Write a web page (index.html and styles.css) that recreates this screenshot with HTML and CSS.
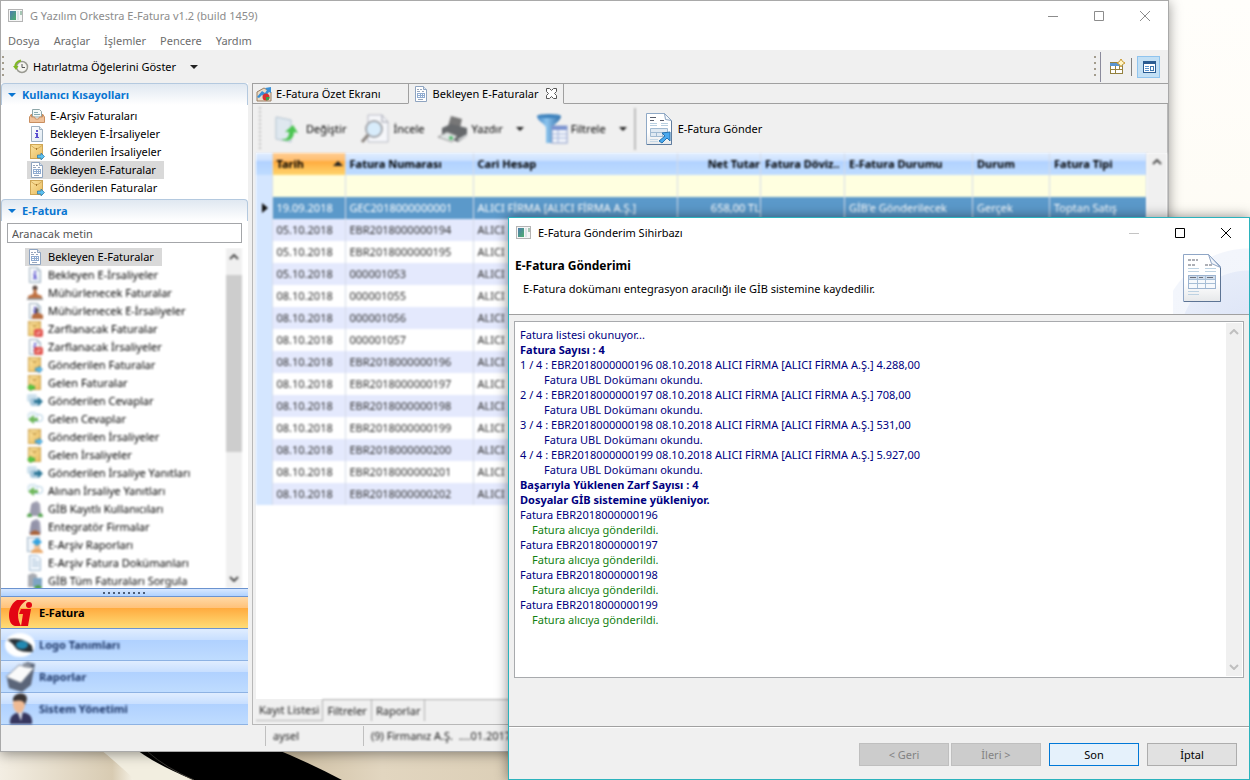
FILE: index.html
```html
<!DOCTYPE html>
<html lang="tr">

<head>
	<meta charset="utf-8">
	<title>G Yazılım Orkestra E-Fatura</title>
	<link rel="stylesheet" href="styles.css">
</head>

<body>

	<!-- Icon definitions, used below with <use> -->
	<svg class="icon-defs" aria-hidden="true">
		<defs>
			<linearGradient id="teal" x1="0" y1="0" x2="1" y2="1">
				<stop offset="0" stop-color="#4d7cae"/><stop offset="1" stop-color="#4fae6e"/>
			</linearGradient>
			<linearGradient id="gold" x1="0" y1="0" x2="1" y2="1">
				<stop offset="0" stop-color="#fbe3a0"/><stop offset="1" stop-color="#e8bb5e"/>
			</linearGradient>
			<linearGradient id="paper" x1="0" y1="0" x2="1" y2="1">
				<stop offset="0" stop-color="#ffffff"/><stop offset="1" stop-color="#dfe9f2"/>
			</linearGradient>
			<linearGradient id="page" x1="0" y1="0" x2="0" y2="1">
				<stop offset=".6" stop-color="#ffffff"/><stop offset="1" stop-color="#e6e8ea"/>
			</linearGradient>
			<linearGradient id="funnel" x1="0" y1="0" x2="1" y2="0">
				<stop offset="0" stop-color="#3f84c4"/><stop offset=".4" stop-color="#8cc4ee"/><stop offset="1" stop-color="#2f6da8"/>
			</linearGradient>
		</defs>
		<symbol id="app" viewBox="0 0 16 16">
			<rect x=".5" y="1.500" width="14" height="12" fill="#f6f6f6" stroke="#b4b4b4"/>
			<rect x="2" y="3" width="6" height="9" fill="url(#teal)"/>
			<rect x="9" y="3" width="2" height="9" fill="#dde3e6"/>
			<rect x="12" y="3" width="2" height="4" fill="#a6c6b4"/>
		</symbol>
		<symbol id="tray" viewBox="0 0 16 16">
			<path d="M3.500 1.500h7l2 2V9h-9z" fill="#f5faf8" stroke="#8fa7a9"/>
			<path d="M5 4.500h4M5 6.500h6" stroke="#86aab0"/>
			<path d="M2.500 6L.5 9v5.500h15V9l-2-3v3h-3l-1 2h-3l-1-2h-3z" fill="#f0c29a" stroke="#c98f60"/>
		</symbol>
		<symbol id="info" viewBox="0 0 16 16">
			<path d="M2.500.5h8l3 3v12h-11z" fill="url(#paper)" stroke="#9fb0bf"/>
			<path d="M10.500.5v3h3" fill="#dce8f0" stroke="#9fb0bf"/>
			<path d="M7 4h2v2H7zM6 7h3v4h1v1H6v-1h1V8H6z" fill="#5a4fd0"/>
		</symbol>
		<symbol id="envelope" viewBox="0 0 16 16">
			<rect x="1.500" y=".5" width="12" height="14" fill="url(#gold)" stroke="#cfa654"/>
			<path d="M2 1.500l4 3h3l4-3" fill="none" stroke="#d3ab5c"/>
			<rect x="7" y="4" width="1" height="2" fill="#a5782c"/>
		</symbol>
		<symbol id="env-out" viewBox="0 0 16 16">
			<use href="#envelope"/>
			<path d="M8.500 11H12V9l3.500 3.500L12 16v-2H8.500z" fill="#5cc0f0" stroke="#2a76a6" stroke-width=".7"/>
		</symbol>
		<symbol id="env-in" viewBox="0 0 16 16">
			<use href="#envelope"/>
			<path d="M7.500 11H4V9L.5 12.500 4 16v-2h3.500z" fill="#55d045" stroke="#34a12c" stroke-width=".7"/>
		</symbol>
		<symbol id="env-seal" viewBox="0 0 16 16">
			<use href="#envelope"/>
			<rect x="7" y="8" width="9" height="8" rx="2" fill="#e2554f"/>
			<path d="M9 13l4-3M10 14l4-3" stroke="#f8bcb8"/>
		</symbol>
		<symbol id="doc-seal" viewBox="0 0 16 16">
			<use href="#info"/>
			<rect x="7" y="8" width="9" height="8" rx="2" fill="#e2554f"/>
			<path d="M9 13l4-3M10 14l4-3" stroke="#f8bcb8"/>
		</symbol>
		<symbol id="invoice" viewBox="0 0 16 16">
			<path d="M2.500.5h8l3 3v12h-11z" fill="#fff" stroke="#8fa4c0"/>
			<path d="M10.500.5v3h3" fill="#dbe5f0" stroke="#8fa4c0"/>
			<path d="M4 3.500h2M7 3.500h2M4 5.500h3M9 5.500h2M5 13.500h5" stroke="#98a6bc"/>
			<rect x="4" y="7" width="8" height="5" fill="#8fabd0"/>
			<path d="M5 8h2v1H5zM8 8h1v1H8zM10 8h1v1h-1zM5 10h2v1H5zM8 10h1v1H8zM10 10h1v1h-1z" fill="#fff"/>
		</symbol>
		<symbol id="stamp" viewBox="0 0 16 16">
			<circle cx="8" cy="3" r="2.500" fill="#5b4a44"/>
			<path d="M7 4h2l1 5 5 2v2H1v-2l5-2z" fill="#bf7040"/>
			<rect x="0" y="13" width="16" height="2" fill="#9a9a9a"/>
		</symbol>
		<symbol id="doc-stamp" viewBox="0 0 16 16">
			<use href="#info"/>
			<path d="M10 5c2 0 2 2 1 5h-2c-1-3-1-5 1-5z" fill="#5b5450"/>
			<path d="M5 12l4-2h3l4 2v4H5z" fill="#b86d40"/>
		</symbol>
		<symbol id="reply-out" viewBox="0 0 16 16">
			<rect x="0" y="1" width="10" height="8" rx="2" fill="#cfe2ee"/>
			<rect x="3" y="5" width="11" height="8" rx="3" fill="#a7c8dc"/>
			<path d="M7 7h4V4l5 4.500-5 4.500v-3H7z" fill="#2c7696"/>
		</symbol>
		<symbol id="reply-in" viewBox="0 0 16 16">
			<rect x="5" y="3.500" width="10.500" height="7" rx="3" fill="#fff" stroke="#a4c6dc"/>
			<rect x="1" y="1.500" width="9" height="7" rx="3" fill="#eef6fa" stroke="#c3dae8"/>
			<path d="M11 7H7V4L1 8.500 7 13v-3h4z" fill="#6fb85a"/>
		</symbol>
		<symbol id="users" viewBox="0 0 16 16">
			<path d="M5 2l5-2 3 3 1 12H2L4 4z" fill="#a3a3b4"/>
			<path d="M6 3v11M9 3v11" stroke="#8c8ca2"/>
			<path d="M0 16c0-5 5-5 5 0zM11 16c0-5 5-5 5 0z" fill="#56a550"/>
		</symbol>
		<symbol id="firm" viewBox="0 0 16 16">
			<path d="M5 2l5-2 3 3 1 12H2L4 4z" fill="#9b9bb0"/>
			<path d="M6 3v8M9 3v8" stroke="#83839b"/>
			<path d="M3 16c0-6 10-6 10 0z" fill="#a9623a"/>
		</symbol>
		<symbol id="report" viewBox="0 0 16 16">
			<rect x=".5" y=".5" width="12" height="14" fill="#eef3f8" stroke="#9fb3c6"/>
			<path d="M4 16c0-6 12-6 12 0z" fill="#eaa96a"/>
			<circle cx="10" cy="9" r="3" fill="#f3c296"/>
			<path d="M10 1l5 4-5 4-5-4z" fill="#35a3df"/>
		</symbol>
		<symbol id="docs" viewBox="0 0 16 16">
			<path d="M2.500.5h8l3 3v12h-11z" fill="#eef5fb" stroke="#a6bdd3"/>
			<path d="M5 4.500h4M5 7.500h7M5 10.500h7" stroke="#9bb6d0"/>
		</symbol>
		<symbol id="query" viewBox="0 0 16 16">
			<path d="M1 2l5-2 4 2v12H1z" fill="#a8abb2"/>
			<rect x="6" y="5" width="9" height="9" fill="#7fa5c4"/>
			<path d="M7 16c0-5 8-5 8 0z" fill="#4c9e48"/>
		</symbol>
		<symbol id="big-invoice" viewBox="0 0 38 48">
			<path d="M.5.5h25l12 12v35H.5z" fill="url(#page)" stroke="#8fa6c6"/>
			<path d="M37.500 13v34.500H1" fill="none" stroke="#5d7494"/>
			<path d="M25.500.5l3 9 9 4z" fill="#f3f6fb" stroke="#8ea4c4"/>
			<path d="M5 6h10M5 11h7M22 11h8" stroke="#5d606c" stroke-dasharray="3 1"/>
			<path d="M5 14.500h11M5 17.500h11M22 14.500h11M22 17.500h11M5 37.500h11M5 40.500h11" stroke="#bdd2e2"/>
			<rect x="5.500" y="21.500" width="27" height="13" fill="#f6f9fc" stroke="#9db4d0"/>
			<path d="M6 22h26v3H6z" fill="#cfdceb"/>
			<path d="M6 25.500h26M6 29.500h26M14.500 22v12M22.500 22v12" stroke="#a8bfd6"/>
			<path d="M7 23.500h6M16 23.500h4M24 23.500h6" stroke="#6b6f7a"/>
		</symbol>
	</svg>

	<!-- Wallpaper -->
	<svg class="wallpaper-curve" viewBox="0 0 510 40" aria-hidden="true">
		<defs>
			<linearGradient id="sand" x1="0" y1="0" x2="1" y2="0">
				<stop offset="0" stop-color="#f3eee3"/><stop offset=".22" stop-color="#d8cbb2"/>
				<stop offset=".26" stop-color="#f3efe2"/><stop offset=".5" stop-color="#c9b99b"/>
				<stop offset=".75" stop-color="#e2d6c0"/><stop offset="1" stop-color="#dccfb7"/>
			</linearGradient>
		</defs>
		<rect width="510" height="40" fill="url(#sand)"/>
		<path d="M96 6q18 14 39 34h56Q152 20 132 6z" fill="#f2eee0"/>
		<path d="M132 6q20 17 62 34h148Q304 20 268 6z" fill="#000"/>
		<path d="M148 12q18 16 46 28" fill="none" stroke="#3a3834"/>
	</svg>

	<div class="window main-window">
		<div class="title-bar">
			<svg class="icon"><use href="#app"/></svg>
			<span class="title-text">G Yazılım Orkestra E-Fatura v1.2 (build 1459)</span>
			<button class="caption-button" aria-label="Simge durumuna küçült"><svg viewBox="0 0 10 10"><path d="M0 5.500h10"/></svg></button>
			<button class="caption-button" aria-label="Ekranı kapla"><svg viewBox="0 0 10 10"><path d="M.5.5h9v9h-9z"/></svg></button>
			<button class="caption-button" aria-label="Kapat"><svg viewBox="0 0 10 10"><path d="M0 0l10 10M10 0L0 10"/></svg></button>
		</div>

		<div class="menu-bar">
			<button>Dosya</button>
			<button>Araçlar</button>
			<button>İşlemler</button>
			<button>Pencere</button>
			<button>Yardım</button>
		</div>

		<div class="tool-bar">
			<span class="grip"></span>
			<button class="reminder">
				<svg class="icon" viewBox="0 0 16 16">
					<circle cx="9" cy="8" r="5.500" fill="#f4f4f0" stroke="#9a9a92" stroke-width="1.500"/>
					<path d="M9 5v3.500h3" fill="none" stroke="#555"/>
					<path d="M8 1.500C4 2 2 5 2.500 8" fill="none" stroke="#7fb822" stroke-width="2"/>
					<path d="M0 7h5.500L3 11z" fill="#7fb822"/>
				</svg>
				Hatırlatma Öğelerini Göster
				<span class="caret"></span>
			</button>
			<div class="perspectives">
				<span class="grip"></span>
				<span class="curve"></span>
				<button aria-label="Perspektif aç">
					<svg class="icon" viewBox="0 0 16 16">
						<rect x="1.500" y="3.500" width="12" height="11" fill="#fff" stroke="#94813f"/>
						<path d="M1 4h13v3H1z" fill="#5a94cf"/>
						<path d="M6.500 7v8M1 10.500h13M10.500 7v4" stroke="#94813f"/>
						<path d="M12 0l1.500 2.500L16 4l-2.500 1.500L12 8l-1.500-2.500L8 4l2.500-1.500z" fill="#fff6c8" stroke="#c9962c"/>
					</svg>
				</button>
				<span class="divider"></span>
				<button class="pressed" aria-label="E-Fatura perspektifi">
					<svg class="icon" viewBox="0 0 16 16">
						<rect x="2.500" y="2.500" width="12" height="11" fill="#fff" stroke="#2a5c92"/>
						<path d="M2 3h13v2H2z" fill="#2a5c92"/>
						<path d="M4 7.500h4M4 9.500h4M4 11.500h4" stroke="#5a94cf"/>
						<rect x="9.500" y="7.500" width="3" height="4" fill="none" stroke="#3f78b0"/>
					</svg>
				</button>
			</div>
		</div>

		<div class="workbench">
			<div class="side">
				<div class="section">
					<h2 class="section-title">Kullanıcı Kısayolları</h2>
					<ul class="tree shortcuts">
						<li><a href="#"><svg class="icon"><use href="#tray"/></svg>E-Arşiv Faturaları</a></li>
						<li><a href="#"><svg class="icon"><use href="#info"/></svg>Bekleyen E-İrsaliyeler</a></li>
						<li><a href="#"><svg class="icon"><use href="#env-out"/></svg>Gönderilen İrsaliyeler</a></li>
						<li><a href="#" class="selected"><svg class="icon"><use href="#invoice"/></svg>Bekleyen E-Faturalar</a></li>
						<li><a href="#"><svg class="icon"><use href="#env-out"/></svg>Gönderilen Faturalar</a></li>
					</ul>
				</div>

				<div class="section section-grow">
					<h2 class="section-title">E-Fatura</h2>
					<input class="search" type="text" placeholder="Aranacak metin" aria-label="Aranacak metin">
					<div class="tree-scroll">
						<ul class="tree">
							<li><a href="#" class="selected"><svg class="icon"><use href="#invoice"/></svg>Bekleyen E-Faturalar</a></li>
							<li class="soft"><a href="#"><svg class="icon"><use href="#info"/></svg>Bekleyen E-İrsaliyeler</a></li>
							<li class="soft"><a href="#"><svg class="icon"><use href="#stamp"/></svg>Mühürlenecek Faturalar</a></li>
							<li class="soft"><a href="#"><svg class="icon"><use href="#doc-stamp"/></svg>Mühürlenecek E-İrsaliyeler</a></li>
							<li class="soft"><a href="#"><svg class="icon"><use href="#env-seal"/></svg>Zarflanacak Faturalar</a></li>
							<li class="soft"><a href="#"><svg class="icon"><use href="#doc-seal"/></svg>Zarflanacak İrsaliyeler</a></li>
							<li class="soft"><a href="#"><svg class="icon"><use href="#env-out"/></svg>Gönderilen Faturalar</a></li>
							<li class="soft"><a href="#"><svg class="icon"><use href="#env-in"/></svg>Gelen Faturalar</a></li>
							<li class="soft"><a href="#"><svg class="icon"><use href="#reply-out"/></svg>Gönderilen Cevaplar</a></li>
							<li class="soft"><a href="#"><svg class="icon"><use href="#reply-in"/></svg>Gelen Cevaplar</a></li>
							<li class="soft"><a href="#"><svg class="icon"><use href="#env-out"/></svg>Gönderilen İrsaliyeler</a></li>
							<li class="soft"><a href="#"><svg class="icon"><use href="#env-in"/></svg>Gelen İrsaliyeler</a></li>
							<li class="soft"><a href="#"><svg class="icon"><use href="#reply-out"/></svg>Gönderilen İrsaliye Yanıtları</a></li>
							<li class="soft"><a href="#"><svg class="icon"><use href="#reply-in"/></svg>Alınan İrsaliye Yanıtları</a></li>
							<li class="soft"><a href="#"><svg class="icon"><use href="#users"/></svg>GİB Kayıtlı Kullanıcıları</a></li>
							<li class="soft"><a href="#"><svg class="icon"><use href="#firm"/></svg>Entegratör Firmalar</a></li>
							<li class="soft"><a href="#"><svg class="icon"><use href="#report"/></svg>E-Arşiv Raporları</a></li>
							<li class="soft"><a href="#"><svg class="icon"><use href="#docs"/></svg>E-Arşiv Fatura Dokümanları</a></li>
							<li class="soft"><a href="#"><svg class="icon"><use href="#query"/></svg>GİB Tüm Faturaları Sorgula</a></li>
						</ul>
						<div class="scrollbar soft">
							<svg class="arrow" viewBox="0 0 10 6"><path d="M1 5l4-4 4 4"/></svg>
							<div class="thumb"></div>
							<svg class="arrow arrow-end" viewBox="0 0 10 6"><path d="M1 1l4 4 4-4"/></svg>
						</div>
					</div>
				</div>

				<div class="sash"></div>
				<div class="nav">
					<button class="nav-item active">
						<svg class="nav-icon" viewBox="0 0 32 32">
							<path d="M14 3h10c-5 3-9 8-9 15 0 4 1 7 3 11h-6c-4-1-6-5-6-11C6 11 10 5 14 3z" fill="#e30613"/>
							<path d="M18 12h10l-3 17h-7l2-12h-4z" fill="#e30613"/>
							<circle cx="26" cy="8" r="3" fill="#e30613"/>
						</svg>
						E-Fatura
					</button>
					<button class="nav-item">
						<svg class="nav-icon soft" viewBox="0 0 32 32">
							<ellipse cx="17" cy="16" rx="15" ry="12" fill="#fff"/>
							<path d="M4 11c9-3 20 0 25 6l1 6c-6 0-15 0-18-5-3-4-5-6-8-7z" fill="#2a3238"/>
							<ellipse cx="19" cy="16" rx="6" ry="4" fill="#2189b2"/>
						</svg>
						<span class="soft">Logo Tanımları</span>
					</button>
					<button class="nav-item">
						<svg class="nav-icon soft" viewBox="0 0 32 32">
							<path d="M4 18L24 1l8 2-4 21-9 7L6 27z" fill="#5b6579"/>
							<path d="M3 16L16 4l15 3-13 15z" fill="#fafafa" stroke="#7f8795"/>
							<path d="M20 2l8 1-1 4-7-1z" fill="#8d939e"/>
						</svg>
						<span class="soft">Raporlar</span>
					</button>
					<button class="nav-item">
						<svg class="nav-icon soft" viewBox="0 0 32 32">
							<path d="M7 31c-1-9 5-11 11-12 7 1 12 3 11 12z" fill="#37375f"/>
							<path d="M14 18h6l-2 10z" fill="#d9dbe6"/>
							<ellipse cx="16" cy="11" rx="6" ry="9" fill="#efba94"/>
							<path d="M10 8C9-1 24-2 24 6l-2 6c-1-5-5-5-12-4z" fill="#3a3535"/>
						</svg>
						<span class="soft">Sistem Yönetimi</span>
					</button>
				</div>
			</div>

			<div class="editor">
				<div class="tabs">
					<button class="tab">
						<svg class="icon" viewBox="0 0 16 16">
							<path d="M1 6l7-4 7 4v9H1z" fill="#e9dcc8" stroke="#9a7f63"/>
							<path d="M1 11l5-6 3 2 2-3-2-2 6-1v6l-2-1-4 5-3-2-3 3z" fill="#3a90d6"/>
							<circle cx="10" cy="11" r="3.500" fill="#d8302f"/>
							<path d="M10 11h3.500a3.500 3.500 0 0 1-3.500 3.500z" fill="#37a24a"/>
						</svg>
						E-Fatura Özet Ekranı
					</button>
					<button class="tab active">
						<svg class="icon"><use href="#invoice"/></svg>
						Bekleyen E-Faturalar
						<svg class="tab-close" viewBox="0 0 11 11"><path d="M.5.5h3l2 2 2-2h3v3l-2 2 2 2v3h-3l-2-2-2 2h-3v-3l2-2-2-2z"/></svg>
					</button>
					<span class="tabs-rest"></span>
				</div>

				<div class="view-body">
					<div class="actions">
						<span class="fine-grip soft"></span>
						<button class="action soft">
							<svg class="action-icon" viewBox="0 0 32 32">
								<path d="M5 4l15 3v22L5 26z" fill="#dfe8ef" stroke="#b2c2cf"/>
								<path d="M10 26c8 1 8-4 8-7h-4l8-7 5 8-4-1c0 7-6 11-13 7z" fill="#4cc552"/>
							</svg>
							Değiştir
						</button>
						<button class="action soft">
							<svg class="action-icon" viewBox="0 0 32 32">
								<path d="M10 2h14l6 7v20H10z" fill="#f6f7fa" stroke="#b7b9c4"/>
								<path d="M24 2v7h6" fill="none" stroke="#9a9ca8"/>
								<circle cx="16" cy="16" r="8" fill="#d8ecfb" stroke="#a5a8ad" stroke-width="2"/>
								<path d="M10 22l-6 7" stroke="#8b8580" stroke-width="3"/>
							</svg>
							İncele
						</button>
						<button class="action soft">
							<svg class="action-icon" viewBox="0 0 32 32">
								<path d="M14 3l11 3-2 9-12-2z" fill="#777"/>
								<path d="M5 15l9-4 16 4v8l-9 6-16-6z" fill="#66696c"/>
								<path d="M1 24l9-5 10 4-5 6z" fill="#dfe4e4" stroke="#999"/>
								<circle cx="14" cy="25" r="2" fill="#4fb96b"/>
								<path d="M21 27l9-5" stroke="#d5d8da" stroke-width="2"/>
							</svg>
							Yazdır
							<span class="caret"></span>
						</button>
						<button class="action soft">
							<svg class="action-icon" viewBox="0 0 32 32">
								<path d="M1 3h24c0 5-8 8-8 12v15h-7V15C10 11 1 8 1 3z" fill="url(#funnel)"/>
								<ellipse cx="13" cy="3" rx="12" ry="2" fill="#3f83bd"/>
								<rect x="16" y="13" width="15" height="17" fill="#f2f5fb" stroke="#8c9dc9"/>
								<path d="M16 13h15v4H16z" fill="#7b93d0"/>
								<path d="M16 21h15M16 25h15M22 17v13" stroke="#9fb0d8"/>
							</svg>
							Filtrele
							<span class="caret"></span>
						</button>
						<span class="action-divider soft"></span>
						<button class="action">
							<svg class="action-icon" viewBox="0 0 32 32">
								<path d="M3.500.5h18l7 7v24h-25z" fill="url(#page)" stroke="#8fa9c6"/>
								<path d="M28.500 8v23.500H4" fill="none" stroke="#5f7c9e"/>
								<path d="M21.500.5l1 6 6 1z" fill="#f4f8fc" stroke="#8aa3c0"/>
								<path d="M7 4.500h6M7 7.500h4M17 7.500h4" stroke="#5a5f6e"/>
								<path d="M7 10.500h7M7 12.500h7M18 10.500h7M18 12.500h7" stroke="#b8cfe0"/>
								<path d="M7.500 15.500h17v8h-17z" fill="#dfe9f2" stroke="#a0bad2"/>
								<path d="M8 19.500h16M13.500 19v4M19.500 19v4" stroke="#a0bad2"/>
								<path d="M7 26.500h8M7 28.500h8" stroke="#c6d8e6"/>
								<path d="M16 28l6-5-3-3 8-1v9l-3-3-5 5z" fill="#4aa9ee" stroke="#2271b0"/>
							</svg>
							E-Fatura Gönder
						</button>
					</div>

					<div class="grid-area">
						<table class="grid soft">
							<colgroup>
								<col class="c-mark"><col class="c-date"><col class="c-number"><col class="c-account"><col class="c-total">
								<col class="c-currency"><col class="c-einvoice"><col class="c-status"><col class="c-type">
							</colgroup>
							<thead>
								<tr><th></th><th class="sorted">Tarih<span class="sort-mark"></span></th><th>Fatura Numarası</th><th>Cari Hesap</th><th class="num">Net Tutar</th><th>Fatura Döviz..</th><th>E-Fatura Durumu</th><th>Durum</th><th>Fatura Tipi</th></tr>
							</thead>
							<tbody>
								<tr class="filter"><td></td><td></td><td></td><td></td><td></td><td></td><td></td><td></td><td></td></tr>
								<tr class="current"><td><span class="row-mark"></span></td><td>19.09.2018</td><td>GEC2018000000001</td><td>ALICI FİRMA [ALICI FİRMA A.Ş.]</td><td class="num">658,00 TL</td><td></td><td>GİB'e Gönderilecek</td><td>Gerçek</td><td>Toptan Satış</td></tr>
								<tr><td></td><td>05.10.2018</td><td>EBR2018000000194</td><td>ALICI</td><td></td><td></td><td></td><td></td><td></td></tr>
								<tr><td></td><td>05.10.2018</td><td>EBR2018000000195</td><td>ALICI</td><td></td><td></td><td></td><td></td><td></td></tr>
								<tr><td></td><td>05.10.2018</td><td>000001053</td><td>ALICI</td><td></td><td></td><td></td><td></td><td></td></tr>
								<tr><td></td><td>08.10.2018</td><td>000001055</td><td>ALICI</td><td></td><td></td><td></td><td></td><td></td></tr>
								<tr><td></td><td>08.10.2018</td><td>000001056</td><td>ALICI</td><td></td><td></td><td></td><td></td><td></td></tr>
								<tr><td></td><td>08.10.2018</td><td>000001057</td><td>ALICI</td><td></td><td></td><td></td><td></td><td></td></tr>
								<tr><td></td><td>08.10.2018</td><td>EBR2018000000196</td><td>ALICI</td><td></td><td></td><td></td><td></td><td></td></tr>
								<tr><td></td><td>08.10.2018</td><td>EBR2018000000197</td><td>ALICI</td><td></td><td></td><td></td><td></td><td></td></tr>
								<tr><td></td><td>08.10.2018</td><td>EBR2018000000198</td><td>ALICI</td><td></td><td></td><td></td><td></td><td></td></tr>
								<tr><td></td><td>08.10.2018</td><td>EBR2018000000199</td><td>ALICI</td><td></td><td></td><td></td><td></td><td></td></tr>
								<tr><td></td><td>08.10.2018</td><td>EBR2018000000200</td><td>ALICI</td><td></td><td></td><td></td><td></td><td></td></tr>
								<tr><td></td><td>08.10.2018</td><td>EBR2018000000201</td><td>ALICI</td><td></td><td></td><td></td><td></td><td></td></tr>
								<tr><td></td><td>08.10.2018</td><td>EBR2018000000202</td><td>ALICI</td><td></td><td></td><td></td><td></td><td></td></tr>
							</tbody>
						</table>
						<div class="scrollbar soft">
							<svg class="arrow" viewBox="0 0 10 6"><path d="M1 5l4-4 4 4"/></svg>
						</div>
					</div>

					<div class="bottom-tabs soft">
						<button class="bottom-tab active">Kayıt Listesi</button>
						<button class="bottom-tab">Filtreler</button>
						<button class="bottom-tab">Raporlar</button>
						<span class="bottom-rest"></span>
					</div>
				</div>
			</div>
		</div>

		<div class="status-bar">
			<span class="status-item status-user"><span class="soft">aysel</span></span>
			<span class="status-item"><span class="soft">(9) Firmanız A.Ş.&nbsp; ....01.2017</span></span>
		</div>
	</div>

	<div class="window dialog" role="dialog" aria-labelledby="dialog-title">
		<div class="title-bar">
			<svg class="icon"><use href="#app"/></svg>
			<span class="title-text">E-Fatura Gönderim Sihirbazı</span>
			<button class="caption-button" aria-label="Simge durumuna küçült" disabled><svg viewBox="0 0 10 10"><path d="M0 5.500h10"/></svg></button>
			<button class="caption-button" aria-label="Ekranı kapla"><svg viewBox="0 0 10 10"><path d="M.5.5h9v9h-9z"/></svg></button>
			<button class="caption-button" aria-label="Kapat"><svg viewBox="0 0 10 10"><path d="M0 0l10 10M10 0L0 10"/></svg></button>
		</div>
		<div class="banner">
			<div class="banner-text">
				<h1 id="dialog-title">E-Fatura Gönderimi</h1>
				<p>E-Fatura dokümanı entegrasyon aracılığı ile GİB sistemine kaydedilir.</p>
			</div>
			<div class="banner-art">
				<svg class="banner-icon"><use href="#big-invoice"/></svg>
			</div>
		</div>

		<div class="dialog-body">
			<div class="log">
				<div class="log-lines">
					<p>Fatura listesi okunuyor...</p>
					<p class="strong">Fatura Sayısı : 4</p>
					<p>1 / 4 : EBR2018000000196 08.10.2018 ALICI FİRMA [ALICI FİRMA A.Ş.] 4.288,00</p>
					<p class="step">Fatura UBL Dokümanı okundu.</p>
					<p>2 / 4 : EBR2018000000197 08.10.2018 ALICI FİRMA [ALICI FİRMA A.Ş.] 708,00</p>
					<p class="step">Fatura UBL Dokümanı okundu.</p>
					<p>3 / 4 : EBR2018000000198 08.10.2018 ALICI FİRMA [ALICI FİRMA A.Ş.] 531,00</p>
					<p class="step">Fatura UBL Dokümanı okundu.</p>
					<p>4 / 4 : EBR2018000000199 08.10.2018 ALICI FİRMA [ALICI FİRMA A.Ş.] 5.927,00</p>
					<p class="step">Fatura UBL Dokümanı okundu.</p>
					<p class="strong">Başarıyla Yüklenen Zarf Sayısı : 4</p>
					<p class="strong">Dosyalar GİB sistemine yükleniyor.</p>
					<p>Fatura EBR2018000000196</p>
					<p class="sent">Fatura alıcıya gönderildi.</p>
					<p>Fatura EBR2018000000197</p>
					<p class="sent">Fatura alıcıya gönderildi.</p>
					<p>Fatura EBR2018000000198</p>
					<p class="sent">Fatura alıcıya gönderildi.</p>
					<p>Fatura EBR2018000000199</p>
					<p class="sent">Fatura alıcıya gönderildi.</p>
				</div>
				<div class="scrollbar idle">
					<svg class="arrow" viewBox="0 0 10 6"><path d="M1 5l4-4 4 4"/></svg>
					<svg class="arrow arrow-end" viewBox="0 0 10 6"><path d="M1 1l4 4 4-4"/></svg>
				</div>
			</div>
		</div>

		<div class="dialog-buttons">
			<div class="pair">
				<button disabled>&lt; Geri</button>
				<button disabled>İleri &gt;</button>
			</div>
			<button class="default">Son</button>
			<button>İptal</button>
		</div>
	</div>

</body>

</html>
```
FILE: styles.css
```css
* {
	box-sizing: border-box;
}

html,
body {
	height: 100%;
	margin: 0;
	overflow: hidden;
}

body {
	position: relative;
	background: linear-gradient(#fffefb, #fbf6e6);
	font-family: "Noto Sans", "Open Sans", sans-serif;
	font-size: 11px;
	line-height: 18px;
	color: #000;
}

button {
	margin: 0;
	padding: 0;
	border: 0;
	background: none;
	font: inherit;
	color: inherit;
	white-space: nowrap;
}

h1, h2, p, ul {
	margin: 0;
	padding: 0;
}

.icon-defs {
	position: absolute;
	width: 0;
	height: 0;
}

.icon {
	width: 16px;
	height: 16px;
	flex: none;
}

.soft {
	filter: blur(1px);
}

.wallpaper-curve {
	position: absolute;
	left: 0;
	bottom: 0;
	width: 510px;
	height: 40px;
}

/* windows */
.window {
	position: absolute;
	display: flex;
	flex-direction: column;
	background: #f0f0f0;
}

.main-window {
	top: 0;
	left: 0;
	right: 81px;
	bottom: 28px;
	border: 1px solid #a9a9a9;
	box-shadow: 0 2px 12px rgba(0, 0, 0, 0.4);
}

.dialog {
	top: 217px;
	left: 508px;
	right: 0;
	bottom: 0;
	border: 1px solid #2bb3bd;
	box-shadow: 0 0 12px rgba(0, 0, 0, 0.45);
}

.title-bar {
	display: flex;
	align-items: center;
	height: 30px;
	padding-left: 7px;
	gap: 6px;
	background: #fff;
	flex: none;
}

.main-window .title-bar {
	color: #8c8c8c;
}

.title-text {
	flex: 1;
}

.caption-button {
	width: 46px;
	height: 30px;
	margin-left: -6px;
}

.caption-button svg {
	display: block;
	width: 10px;
	height: 10px;
	margin: auto;
	fill: none;
	stroke: currentColor;
}

.caption-button:disabled {
	color: #c4c4c4;
}

.menu-bar {
	display: flex;
	gap: 14px;
	height: 19px;
	padding-left: 7px;
	background: #fff;
	color: #6d6d6d;
	flex: none;
}

/* main toolbar */
.tool-bar {
	display: flex;
	align-items: center;
	height: 33px;
	flex: none;
}

.grip {
	width: 2px;
	height: 22px;
	margin-left: 1px;
	background: repeating-linear-gradient(#a39c8d 0, #a39c8d 2px, transparent 2px, transparent 6px);
}

.reminder {
	display: flex;
	align-items: center;
	gap: 4px;
	margin-left: 9px;
}

.caret {
	display: inline-block;
	border: 4px solid transparent;
	border-top-color: #222;
	border-bottom: 0;
	margin-left: 10px;
}

.perspectives {
	display: flex;
	align-items: center;
	margin-left: auto;
	padding-right: 8px;
}

.perspectives button {
	display: flex;
	align-items: center;
	justify-content: center;
	width: 23px;
	height: 22px;
}

.perspectives .pressed {
	border: 1px solid #90c4ee;
	background: #c3e0f5;
}

.curve {
	width: 1px;
	height: 30px;
	margin: 0 4px;
	background: #8b8b9c;
}

.divider {
	width: 1px;
	height: 18px;
	margin: 0 5px 0 3px;
	background: #808080;
}

.workbench {
	display: flex;
	flex: 1;
	min-height: 0;
	gap: 4px;
}

/* left side */
.side {
	display: flex;
	flex-direction: column;
	width: 247px;
	background: #fff;
	flex: none;
}

.section-grow {
	display: flex;
	flex-direction: column;
	flex: 1;
	min-height: 0;
}

.section-title {
	display: flex;
	align-items: center;
	gap: 6px;
	height: 22px;
	padding: 0 6px;
	border: 1px solid #b4c9df;
	border-bottom: 0;
	border-radius: 4px 4px 0 0;
	background: linear-gradient(#e0e8f1, #fff);
	font-size: 11px;
	color: #0a76d2;
}

.section-title::before {
	content: "";
	border: 4px solid transparent;
	border-top-color: #0a76d2;
	border-bottom: 0;
}

.tree {
	list-style: none;
	flex: 1;
	overflow: hidden;
	padding-left: 24px;
}

.shortcuts {
	padding: 2px 0 2px 26px;
}

.tree li {
	display: flex;
	height: 18px;
}

.tree a {
	display: flex;
	align-items: center;
	gap: 5px;
	padding: 0 8px 0 2px;
	color: #000;
	text-decoration: none;
	white-space: nowrap;
}

.tree a.selected {
	background: #d9d9d9;
}

.search {
	height: 20px;
	margin: 2px 6px 5px 6px;
	padding: 0 4px;
	border: 1px solid #a4a6a9;
	font: inherit;
	flex: none;
}

.search::placeholder {
	color: #555;
}

.tree-scroll {
	display: flex;
	flex: 1;
	min-height: 0;
	padding-right: 6px;
	overflow: hidden;
}

.scrollbar {
	display: flex;
	flex-direction: column;
	align-items: center;
	width: 16px;
	padding: 6px 0;
	background: #f0f0f0;
	flex: none;
}

.arrow {
	width: 10px;
	height: 6px;
	fill: none;
	stroke: #505050;
	stroke-width: 2;
	flex: none;
}

.arrow-end {
	margin-top: auto;
}

.idle .arrow {
	stroke: #bfbfbf;
}

.thumb {
	width: 100%;
	height: 54%;
	margin-top: 15px;
	background: #cdcdcd;
}

.sash {
	height: 9px;
	border: 1px solid #6b93cf;
	border-width: 1px 0;
	background:
		repeating-linear-gradient(90deg, #4a5d7a 0, #4a5d7a 2px, transparent 2px, transparent 5px) center / 43px 2px no-repeat,
		linear-gradient(#d8e8ff, #b0d2ff);
	flex: none;
}

.nav-item {
	display: flex;
	align-items: center;
	gap: 4px;
	width: 100%;
	height: 32px;
	padding-left: 2px;
	border-bottom: 1px solid #8db2e3;
	background: linear-gradient(#e0edff 0, #c8dfff 35%, #b0d1ff 36%, #bfdcff 100%);
	font-weight: bold;
	color: #213a6b;
}

.nav-item.active {
	border-color: #6b93cf;
	background: linear-gradient(#ffd9a6 0, #ffc27a 35%, #ffab3f 36%, #ffdc76 100%);
	color: #000;
}

.nav-icon {
	width: 32px;
	height: 32px;
}

/* editor */
.editor {
	display: flex;
	flex-direction: column;
	flex: 1;
	min-width: 0;
}

.tabs {
	display: flex;
	height: 21px;
	border-top: 1px solid #a0a0a0;
	flex: none;
}

.tab {
	display: flex;
	align-items: center;
	gap: 4px;
	padding: 0 27px 0 3px;
	border-left: 1px solid #a0a0a0;
	border-bottom: 1px solid #a0a0a0;
}

.tab.active {
	padding: 0 6px 0 4px;
	border-right: 1px solid #a0a0a0;
	border-bottom-color: #f0f0f0;
}

.tab-close {
	width: 11px;
	height: 11px;
	margin-left: 4px;
	fill: #fff;
	stroke: #555;
}

.tabs-rest {
	flex: 1;
	border-bottom: 1px solid #a0a0a0;
}

.view-body {
	display: flex;
	flex-direction: column;
	flex: 1;
	min-height: 0;
	border: 1px solid #b8b8b8;
	border-top: 0;
	padding-left: 3px;
}

.actions {
	display: flex;
	align-items: center;
	height: 49px;
	padding-left: 3px;
	gap: 12px;
	flex: none;
}

.fine-grip {
	width: 2px;
	height: 44px;
	margin-right: -2px;
	background: repeating-linear-gradient(#c4c4c4 0, #c4c4c4 2px, transparent 2px, transparent 4px);
}

.action {
	display: flex;
	align-items: center;
	gap: 3px;
}

.action .caret {
	margin: 0 0 0 10px;
}

.action-icon {
	width: 32px;
	height: 32px;
}

.action-divider {
	width: 2px;
	height: 42px;
	margin: 0 -5px;
	background: #bdbdbd;
}

.grid-area {
	display: flex;
	flex: 1;
	min-height: 0;
	background: #fff;
	align-items: flex-start;
}

.grid-area .scrollbar {
	width: 20px;
	align-self: stretch;
}

.grid {
	flex: 1;
	min-width: 0;
	width: 100%;
	table-layout: fixed;
	border-collapse: collapse;
}

.c-mark { width: 16px; }
.c-date { width: 73px; }
.c-number { width: 128px; }
.c-total { width: 83px; }
.c-currency { width: 84px; }
.c-einvoice { width: 128px; }
.c-status { width: 77px; }
.c-type { width: 97px; }

.grid th,
.grid td {
	height: 22px;
	padding: 0 2px 0 4px;
	border-right: 1px solid #d4dbe8;
	line-height: 20px;
	text-align: left;
	white-space: nowrap;
	overflow: hidden;
}

.grid th {
	background: linear-gradient(#e0edff 0, #cbe1ff 35%, #b0d1ff 36%, #bfdcff 100%);
}

.grid th.sorted {
	background: linear-gradient(#ffcd92 0, #ffbd6e 35%, #ffa93c 36%, #ffd56e 100%);
}

.grid .num {
	padding-right: 0;
	text-align: right;
}

.sort-mark {
	float: right;
	margin-top: 7px;
	border: 5px solid transparent;
	border-top: 0;
	border-bottom-color: #222;
}

.grid td {
	background: #fff;
	color: #333;
}

.grid tr:nth-child(odd) td {
	background: #e4e9fd;
}

.grid .filter td:nth-child(n+2) {
	background: #ffffe0;
}

.grid .current td:nth-child(n+2) {
	background: #5b99ca;
	color: #fff;
}

.grid tbody tr td:first-child {
	background: #d4e6ff;
}

.row-mark {
	display: block;
	width: 0;
	margin-left: 2px;
	border: 5px solid transparent;
	border-left: 6px solid #111;
	border-right: 0;
}

.bottom-tabs {
	display: flex;
	height: 25px;
	padding-bottom: 3px;
	flex: none;
}

.bottom-tab {
	padding: 0 4px;
	border-right: 1px solid #b0b0b0;
	border-top: 1px solid #b0b0b0;
	color: #222;
}

.bottom-tab.active {
	padding: 0 3px;
	border-top-color: transparent;
	border-bottom: 1px solid #b0b0b0;
}

.bottom-rest {
	flex: 1;
	border-top: 1px solid #b0b0b0;
}

.status-bar {
	display: flex;
	align-items: center;
	height: 26px;
	padding: 0 0 4px 264px;
	flex: none;
	color: #222;
}

.status-item {
	padding-left: 7px;
	border-left: 1px solid #c0c0c0;
	line-height: 20px;
	white-space: nowrap;
}

.status-user {
	width: 98px;
}

/* wizard dialog */
.banner {
	display: flex;
	height: 67px;
	border-bottom: 1px solid #a0a0a0;
	background: #fff;
	flex: none;
}

.banner-text {
	flex: 1;
	padding: 9px 6px 0 6px;
}

.banner h1 {
	font-size: 12px;
	line-height: 18px;
}

.banner p {
	margin-top: 5px;
	padding-left: 8px;
}

.banner-art {
	width: 76px;
	padding: 6px 0 0 10px;
	background:
		radial-gradient(circle at 76px 92px, #dbe3f6 0, #e6ecf9 69px, transparent 70px),
		radial-gradient(circle at 76px 90px, #f1f4fb 0, #f3f6fc 89px, #fff 90px);
}

.banner-icon {
	width: 38px;
	height: 48px;
}

.dialog-body {
	display: flex;
	flex: 1;
	min-height: 0;
	padding: 6px 5px 48px 5px;
	border-bottom: 1px solid #a0a0a0;
}

.log {
	display: flex;
	flex: 1;
	padding: 1px;
	border: 1px solid #a8aaad;
	background: #fff;
}

.log-lines {
	flex: 1;
	padding: 4px;
	line-height: 15px;
	color: #000080;
	white-space: nowrap;
}

.strong {
	font-weight: bold;
}

.step {
	padding-left: 24px;
}

.sent {
	padding-left: 12px;
	color: #118011;
}

.dialog-buttons {
	display: flex;
	justify-content: flex-end;
	gap: 8px;
	padding: 15px 12px 13px 12px;
	border-top: 1px solid #fff;
	flex: none;
}

.pair {
	display: flex;
	gap: 2px;
}

.dialog-buttons button {
	width: 90px;
	height: 23px;
	border: 1px solid #adadad;
	background: #e1e1e1;
}

.dialog-buttons button:disabled {
	border-color: #bfbfbf;
	background: #cccccc;
	color: #838383;
}

.dialog-buttons .default {
	border-color: #0078d7;
	background: #e5f1fb;
}
```
